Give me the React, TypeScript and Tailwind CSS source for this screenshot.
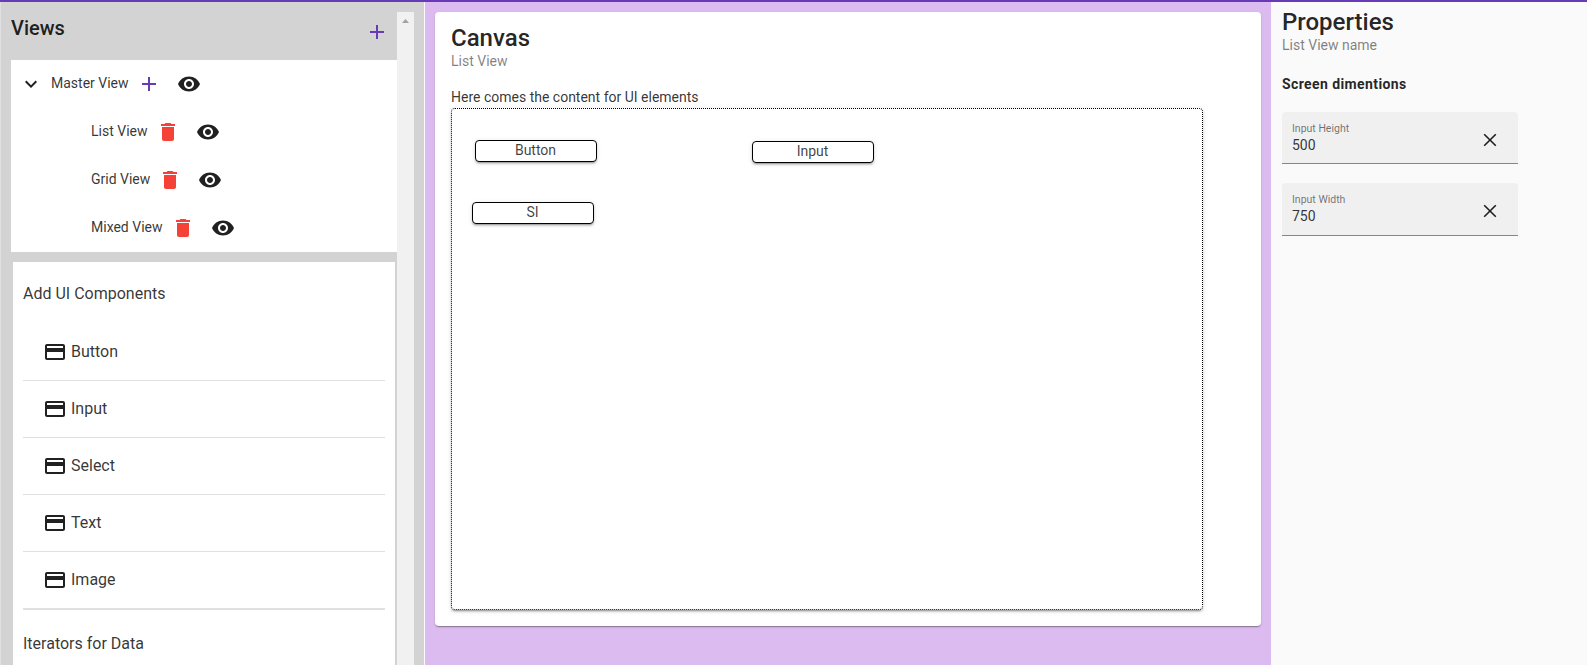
import type { ReactNode } from "react";
import { MdAdd, MdCreditCard, MdDelete, MdExpandMore, MdVisibility } from "react-icons/md";

const childViews = ["List View", "Grid View", "Mixed View"];
const components = ["Button", "Input", "Select", "Text", "Image"];

function IconButton({ label, className, children }: { label: string; className?: string; children: ReactNode }) {
  return (
    <button aria-label={label} className={`flex size-10 shrink-0 items-center justify-center ${className ?? ""}`}>
      {children}
    </button>
  );
}

function CloseIcon() {
  return (
    <svg width="14" height="14" viewBox="0 0 14 14" stroke="currentColor" strokeWidth="1.6" fill="none">
      <path d="M1.2 1.2 12.8 12.8M12.8 1.2 1.2 12.8" />
    </svg>
  );
}

function Sidebar() {
  return (
    <aside className="flex w-[425px] shrink-0 border-r border-l border-r-[#fafafa] border-l-[#e0e0e0] bg-[#d3d3d3] pt-2.5 pl-2.5">
      <div className="w-[386px] shrink-0">
        <div className="flex h-12 items-start justify-between">
          <h2 className="text-[20px] leading-8 font-medium">Views</h2>
          <IconButton label="Add view" className="pr-px text-[#673ab7]">
            <MdAdd size={24} />
          </IconButton>
        </div>
        <div className="bg-white">
          <div className="flex h-12 items-center">
            <IconButton label="Collapse">
              <MdExpandMore size={24} />
            </IconButton>
            <span className="pb-0.5 leading-5 text-black/80">Master View</span>
            <IconButton label="Add child" className="text-[#673ab7]">
              <MdAdd size={24} />
            </IconButton>
            <IconButton label="Show">
              <MdVisibility size={24} />
            </IconButton>
          </div>
          {childViews.map((name) => (
            <div key={name} className="flex h-12 items-center pl-20">
              <span className="pb-0.5 leading-5 text-black/80">{name}</span>
              <IconButton label="Delete" className="text-[#f44336]">
                <MdDelete size={24} />
              </IconButton>
              <IconButton label="Show">
                <MdVisibility size={24} />
              </IconButton>
            </div>
          ))}
        </div>
        <div className="mx-0.5 mt-2.5 h-[403px] overflow-hidden bg-white px-2.5 pt-2.5 text-base">
          <p className="flex h-[52px] items-start pt-2.5 leading-6 text-black/80">Add UI Components</p>
          <ul className="border-b border-[#e0e0e0]">
            {components.map((name) => (
              <li key={name} className="flex h-[57px] items-center gap-1 border-b border-[#e0e0e0] pl-5">
                <MdCreditCard size={24} />
                <span className="text-black/80">{name}</span>
              </li>
            ))}
          </ul>
          <p className="pt-[22px] leading-6 text-black/80">Iterators for Data</p>
        </div>
      </div>
      <div className="flex w-[17px] shrink-0 justify-center bg-[#f1f1f1] pt-[7px]">
        <svg width="7" height="4" viewBox="0 0 7 4" fill="#a3a3a3">
          <path d="M3.5 0 7 4H0z" />
        </svg>
      </div>
    </aside>
  );
}

const nodes = [
  { label: "Button", place: "left-[23px] top-[31px]" },
  { label: "Input", place: "left-[300px] top-8" },
  { label: "SI", place: "left-5 top-[93px]" },
];

function Canvas() {
  return (
    <main className="w-[846px] shrink-0 bg-[#dcbcf0] p-2.5">
      <section className="h-[614px] rounded bg-white p-4 shadow-[0_2px_1px_-1px_rgba(0,0,0,0.2),0_1px_1px_0_rgba(0,0,0,0.14),0_1px_3px_0_rgba(0,0,0,0.12)]">
        <h1 className="-mt-1.5 text-2xl leading-8 font-medium">Canvas</h1>
        <p className="leading-[14px] text-black/50">List View</p>
        <p className="mt-[19px] leading-5 text-black/80">Here comes the content for UI elements</p>
        <div className="relative mt-[1px] h-[502px] w-[752px] rounded border border-dotted border-black shadow-[0_3px_1px_-2px_rgba(0,0,0,0.2),0_2px_2px_0_rgba(0,0,0,0.14),0_1px_5px_0_rgba(0,0,0,0.12)]">
          {nodes.map((n) => (
            <div
              key={n.label}
              className={`absolute flex h-[22px] w-[122px] items-center justify-center rounded border border-black bg-white pr-px pb-0.5 text-black/75 shadow-[0_3px_1px_-2px_rgba(0,0,0,0.2),0_2px_2px_0_rgba(0,0,0,0.14),0_1px_5px_0_rgba(0,0,0,0.12)] ${n.place}`}
            >
              {n.label}
            </div>
          ))}
        </div>
      </section>
    </main>
  );
}

function Field({ label, value, className }: { label: string; value: string; className: string }) {
  return (
    <div className={`flex w-[236px] justify-between rounded-t border-b border-[#868686] bg-[#f0f0f0] pl-2.5 ${className}`}>
      <div className="pt-2.5">
        <div className="text-[10.5px] leading-[14px] text-black/55">{label}</div>
        <div className="-mt-px leading-5 text-black/80">{value}</div>
      </div>
      <IconButton label="Clear" className="mt-[7px] mr-2 pt-px pr-px">
        <CloseIcon />
      </IconButton>
    </div>
  );
}

function Properties() {
  return (
    <aside className="flex-1 bg-[#fafafa] pl-[11px]">
      <h1 className="pt-1 text-2xl leading-8 font-medium">Properties</h1>
      <p className="leading-[14px] text-black/50">List View name</p>
      <h3 className="mt-[22px] leading-5 font-bold tracking-[0.4px]">Screen dimentions</h3>
      <Field label="Input Height" value="500" className="mt-[18px] h-[52px]" />
      <Field label="Input Width" value="750" className="mt-[19px] h-[53px]" />
    </aside>
  );
}

export default function App() {
  return (
    <div className="flex h-[665px] overflow-hidden border-t-2 border-[#673ab7] font-[Roboto,sans-serif] text-sm text-black/87">
      <Sidebar />
      <Canvas />
      <Properties />
    </div>
  );
}
